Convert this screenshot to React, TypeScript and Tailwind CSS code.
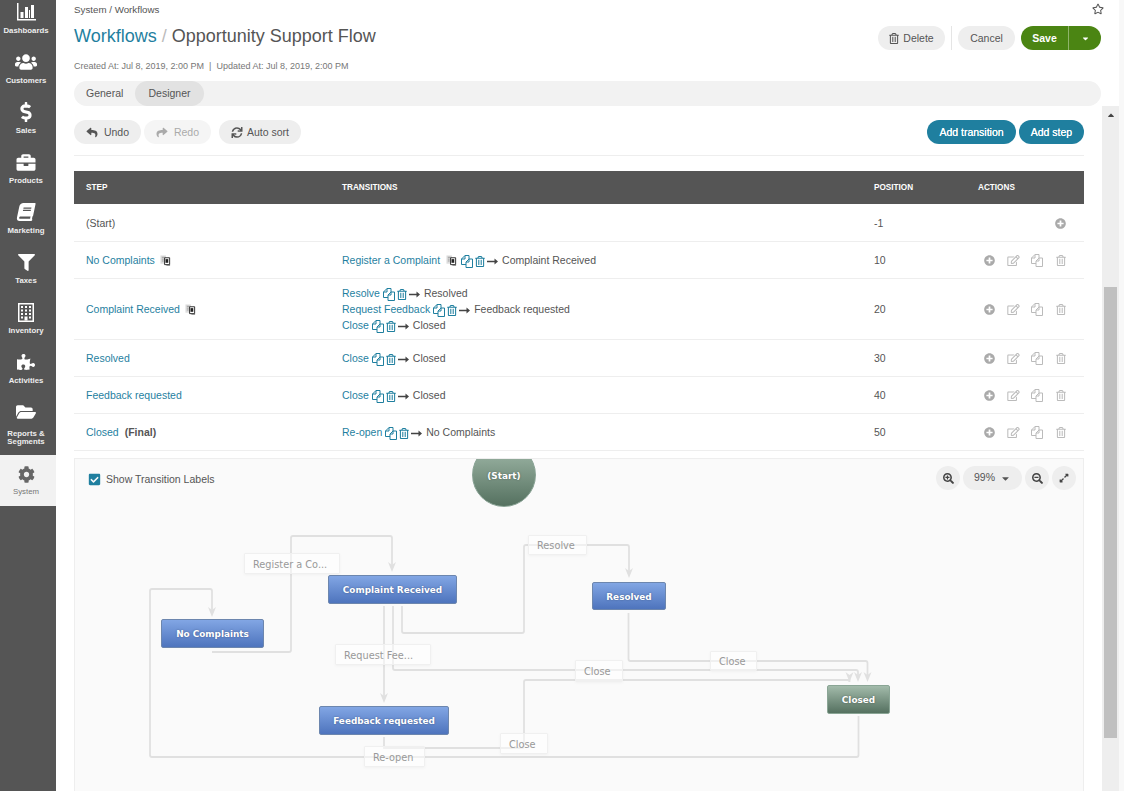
import React from 'react';
import {
  FaUsers, FaDollarSign, FaBriefcase, FaBook, FaFilter, FaPuzzlePiece, FaFolderOpen, FaCog,
  FaReply, FaShare, FaSync, FaRegTrashAlt, FaRegStar, FaPlusCircle, FaRegEdit,
  FaCheckSquare, FaSearchPlus, FaSearchMinus, FaExpandAlt, FaCaretDown, FaCaretUp,
} from 'react-icons/fa';

const BarsIcon = () => (
  <svg viewBox="0 0 20 18" className="w-5 h-[18px]" fill="currentColor">
    <path d="M1 0h1.5v16H20v1.5H1z" />
    <rect x="4.5" y="9" width="3" height="6" />
    <rect x="9" y="4" width="3" height="11" />
    <rect x="13" y="7" width="1" height="8" />
    <rect x="15" y="2" width="3" height="13" />
  </svg>
);

const BuildingIcon = () => (
  <svg viewBox="0 0 16 19" className="w-4 h-[19px]" fill="currentColor">
    <path d="M0 0h16v19H0zM1.5 1.5v16h13v-16z" fillRule="evenodd" />
    <path d="M3 3h2v2H3zM7 3h2v2H7zM11 3h2v2h-2zM3 6.500h2v2H3zM7 6.500h2v2H7zM11 6.500h2v2h-2zM3 10h2v2H3zM7 10h2v2H7zM11 10h2v2h-2zM3 13.500h2v2H3zM11 13.500h2v2h-2zM6.500 13.500h3v4h-3z" />
  </svg>
);

const TranslateIcon = () => (
  <svg viewBox="0 0 12 12" className="w-[11px] h-[11px] shrink-0 -translate-y-px">
    <rect x="0.5" y="0.5" width="6" height="9" fill="#dddddd" />
    <path d="M2 2.500h3M2 4.500h2M2 6.500h2" stroke="#888888" strokeWidth="0.8" />
    <path d="M5 3h5.500v7.500H5z" fill="#ffffff" stroke="#222222" strokeWidth="1" />
    <rect x="6" y="4.500" width="3" height="4" fill="#222222" />
    <path d="M7 11.500h4" stroke="#777777" strokeWidth="0.8" />
  </svg>
);

// two sheets with a cut corner, the stock copy icon has no such corner
const CopyIcon = ({ className }: { className: string }) => (
  <svg viewBox="0 0 12 13" className={className} fill="none" stroke="currentColor" strokeWidth="1">
    <path d="M5 9.500H.5V4L4 .5h4V4" />
    <path d="M4 .5V4H.5" />
    <path d="M8 4h3.500v8.500H5V7z" />
    <path d="M8 4v3H5" />
  </svg>
);

const navItems = [
  { label: 'Dashboards', icon: <BarsIcon /> },
  { label: 'Customers', icon: <FaUsers className="w-[22px] h-[20px]" /> },
  { label: 'Sales', icon: <FaDollarSign className="w-[14px] h-[20px]" /> },
  { label: 'Products', icon: <FaBriefcase className="w-[20px] h-[19px]" /> },
  { label: 'Marketing', icon: <FaBook className="w-[18px] h-[18px] -skew-x-12" /> },
  { label: 'Taxes', icon: <FaFilter className="w-[17px] h-[17px]" /> },
  { label: 'Inventory', icon: <BuildingIcon /> },
  { label: 'Activities', icon: <FaPuzzlePiece className="w-[18px] h-[18px]" /> },
];

const Sidebar = () => (
  <aside className="w-14 shrink-0 bg-[#555555] text-white flex flex-col">
    {navItems.map((item) => (
      <div key={item.label} className="flex flex-col items-center h-[50px] pt-[2px] pr-1">
        <div className="h-[20px] flex items-center justify-center">{item.icon}</div>
        <div className="text-[7.8px] font-bold leading-[12px] mt-[3px] text-[#eeeeee]">{item.label}</div>
      </div>
    ))}
    <div className="flex flex-col items-center h-[55px] pt-[2px] pr-1">
      <div className="h-[20px] flex items-center justify-center"><FaFolderOpen className="w-[20px] h-[18px]" /></div>
      <div className="text-[7.8px] font-bold leading-[8px] text-center mt-[8px] text-[#eeeeee]">Reports &<br />Segments</div>
    </div>
    <div className="h-[51px] bg-[#f2f2f2] text-[#666666] flex flex-col items-center pt-[11px] pr-1">
      <FaCog className="w-[17px] h-[17px]" />
      <div className="text-[7.8px] leading-[12px] mt-[3px] text-[#777777]">System</div>
    </div>
  </aside>
);

const Pill = ({ children, className = '' }: { children: React.ReactNode; className?: string }) => (
  <button className={`h-6 pt-px rounded-full text-[10.5px] flex items-center justify-center ${className}`}>
    {children}
  </button>
);

const Arrow = () => (
  <svg viewBox="0 0 11 7" className="w-[11px] h-[7px] text-[#444444] shrink-0 mr-[2px]" fill="currentColor">
    <path d="M0 2.750h7.500V.5L11 3.500 7.500 6.500V4.250H0z" />
  </svg>
);

const Transition = ({ name, to, translate }: { name: string; to: string; translate?: boolean }) => (
  <div className="flex items-center h-4 gap-[2px]">
    <span className="text-[#1f7f9f]">{name}</span>
    {translate && <span className="ml-[4px] mr-[1px]"><TranslateIcon /></span>}
    <CopyIcon className="w-[12px] h-[13px] text-[#1f7f9f] ml-[1px]" />
    <FaRegTrashAlt className="w-[10px] h-[11px] text-[#1f7f9f]" />
    <Arrow />
    <span>{to}</span>
  </div>
);

const Actions = ({ only }: { only?: boolean }) => (
  only ? (
    <div className="flex items-center justify-end pr-[12px]">
      <div className="w-6 flex justify-center"><FaPlusCircle className="w-[11px] h-[11px] text-[#aaaaaa]" /></div>
    </div>
  ) : (
    <div className="flex items-center justify-end pr-[11px] -mt-[2px] text-[#bbbbbb]">
      <div className="w-6 flex justify-center"><FaPlusCircle className="w-[11px] h-[11px] text-[#aaaaaa]" /></div>
      <div className="w-6 flex justify-center"><FaRegEdit className="w-[13px] h-[11px]" /></div>
      <div className="w-6 flex justify-center"><CopyIcon className="w-[12px] h-[13px]" /></div>
      <div className="w-6 flex justify-center"><FaRegTrashAlt className="w-[10px] h-[11px]" /></div>
    </div>
  )
);

const rows = [
  { step: 'No Complaints', translate: true, pos: '10', h: 'h-[37px]', trans: [{ name: 'Register a Complaint', to: 'Complaint Received', translate: true }] },
  { step: 'Complaint Received', translate: true, pos: '20', h: 'h-[61px]', trans: [{ name: 'Resolve', to: 'Resolved' }, { name: 'Request Feedback', to: 'Feedback requested' }, { name: 'Close', to: 'Closed' }] },
  { step: 'Resolved', pos: '30', h: 'h-[37px]', trans: [{ name: 'Close', to: 'Closed' }] },
  { step: 'Feedback requested', pos: '40', h: 'h-[37px]', trans: [{ name: 'Close', to: 'Closed' }] },
  { step: 'Closed', final: true, pos: '50', h: 'h-[37px]', trans: [{ name: 'Re-open', to: 'No Complaints' }] },
];

const gridCols = 'grid grid-cols-[256px_532px_104px_118px] items-center';

const WorkflowTable = () => (
  <div className="text-[10.5px] text-[#555555]">
    <div className={`${gridCols} h-[33px] pt-[2px] bg-[#555555] text-white text-[8.2px] font-bold`}>
      <div className="px-3">STEP</div>
      <div className="px-3">TRANSITIONS</div>
      <div className="px-3">POSITION</div>
      <div className="px-3">ACTIONS</div>
    </div>
    <div className={`${gridCols} h-[38px] pt-[2px] border-b border-[#eeeeee]`}>
      <div className="px-3">(Start)</div>
      <div />
      <div className="px-3">-1</div>
      <Actions only />
    </div>
    {rows.map((r) => (
      <div key={r.step} className={`${gridCols} ${r.h} pt-[2px] border-b border-[#eeeeee]`}>
        <div className="px-3 flex items-center gap-[5px]">
          <span className="text-[#1f7f9f]">{r.step}</span>
          {r.translate && <TranslateIcon />}
          {r.final && <span className="font-bold ml-[1px]">(Final)</span>}
        </div>
        <div className="px-3">
          {r.trans.map((t) => <Transition key={t.name} {...t} />)}
        </div>
        <div className="px-3">{r.pos}</div>
        <Actions />
      </div>
    ))}
  </div>
);

const Node = ({ label, className, green }: { label: string; className: string; green?: boolean }) => (
  <div
    className={`absolute flex items-center justify-center pt-[3px] rounded-[2px] border text-white font-bold text-[8.9px] font-['DejaVu_Sans',sans-serif] [text-shadow:0_0_2px_rgba(0,0,0,0.35)] ${
      green ? 'border-[#8aa595] bg-gradient-to-b from-[#a3bbab] to-[#557160]' : 'border-[#6c86ae] bg-gradient-to-b from-[#82a6e4] to-[#4e74bd]'
    } ${className}`}
  >
    {label}
  </div>
);

const EdgeLabel = ({ label, className }: { label: string; className: string }) => (
  <div className={`absolute flex items-center pl-[8px] pt-[3px] border border-[#f0f0f0] rounded-[1px] bg-white/50 shadow-[0_1px_3px_rgba(0,0,0,0.04)] text-[#999999] text-[9.75px] font-['DejaVu_Sans',sans-serif] ${className}`}>
    {label}
  </div>
);

// arrow tips in page coordinates, the svg viewBox starts at the panel corner
const tip = (x: number, y: number) => `${x - 4},${y - 10} ${x},${y - 7} ${x + 4},${y - 10} ${x},${y}`;

const edges = [
  'M212 652H289q2 0 2-2V538q0-2 2-2H390q2 0 2 2V566',
  'M402 606V631q0 2 2 2H522q2 0 2-2V547q0-2 2-2H627q2 0 2 2V572',
  'M384 606V697',
  'M393 606V668q0 2 2 2H856q2 0 2 2V676',
  'M628.500 613V659q0 2 2 2H865.500q2 0 2 2V676',
  'M384 737V748H522q2 0 2-2V682q0-2 2-2H847.500q2 0 2 2V676',
  'M858.500 716V755q0 2-2 2H152q-2 0-2-2V591q0-2 2-2H210q2 0 2 2V611',
];

const tips: [number, number][] = [[392, 572], [629, 578], [384, 703], [858, 682], [867.5, 682], [849.5, 682], [212, 617]];

const Diagram = () => (
  <div className="relative mt-[7px] h-[400px] border border-[#eeeeee] bg-[#fafafa] overflow-hidden text-[#555555]">
    <svg viewBox="75 459 1008 399" className="absolute left-0 top-0 w-[1008px] h-[399px]">
      {edges.map((d) => <path key={d} d={d} fill="none" stroke="#e0e0e0" strokeWidth="1.8" />)}
      {tips.map(([x, y]) => <polygon key={`${x}-${y}`} points={tip(x, y)} fill="#e0e0e0" />)}
    </svg>

    <div className="absolute left-[397px] -top-[16px] w-16 h-16 rounded-full border border-[#88a294] bg-gradient-to-b from-[#a3bbab] to-[#557160] flex items-center justify-center text-white font-bold text-[8.9px] font-['DejaVu_Sans',sans-serif] [text-shadow:0_0_2px_rgba(0,0,0,0.35)]">
      <span className="mt-[4px]">(Start)</span>
    </div>

    <Node label="Complaint Received" className="left-[253px] top-[116px] w-[129px] h-[29px]" />
    <Node label="No Complaints" className="left-[86px] top-[160px] w-[103px] h-[29px]" />
    <Node label="Resolved" className="left-[517px] top-[123px] w-[74px] h-[28px]" />
    <Node label="Feedback requested" className="left-[244px] top-[247px] w-[130px] h-[29px]" />
    <Node label="Closed" green className="left-[752px] top-[226px] w-[63px] h-[29px]" />

    <EdgeLabel label="Register a Co..." className="left-[169px] top-[94px] w-[96px] h-[21px]" />
    <EdgeLabel label="Request Fee..." className="left-[260px] top-[185px] w-[96px] h-[21px]" />
    <EdgeLabel label="Resolve" className="left-[453px] top-[76px] w-[59px] h-[20px]" />
    <EdgeLabel label="Close" className="left-[500px] top-[201px] w-[48px] h-[22px]" />
    <EdgeLabel label="Close" className="left-[635px] top-[192px] w-[47px] h-[20px]" />
    <EdgeLabel label="Close" className="left-[425px] top-[274px] w-[48px] h-[21px]" />
    <EdgeLabel label="Re-open" className="left-[289px] top-[287px] w-[61px] h-[21px]" />

    <label className="absolute left-[13px] top-[13px] flex items-center gap-[5px] text-[10.5px]">
      <FaCheckSquare className="w-[13px] h-[13px] text-[#1f7f9f]" />
      Show Transition Labels
    </label>

    <div className="absolute right-[7px] top-[7px] flex items-center gap-[3px] text-[#444444]">
      <div className="w-6 h-6 rounded-full bg-[#eeeeee] flex items-center justify-center"><FaSearchPlus className="w-[11px] h-[11px]" /></div>
      <div className="w-[59px] h-6 rounded-full bg-[#eeeeee] flex items-center justify-center gap-[5px] text-[10.5px] text-[#555555]">99% <FaCaretDown className="w-[11px] h-[11px]" /></div>
      <div className="w-6 h-6 rounded-full bg-[#eeeeee] flex items-center justify-center"><FaSearchMinus className="w-[11px] h-[11px]" /></div>
      <div className="w-6 h-6 rounded-full bg-[#eeeeee] flex items-center justify-center"><FaExpandAlt className="w-[10px] h-[10px]" /></div>
    </div>
  </div>
);

const Scrollbar = () => (
  <div className="w-[17px] shrink-0 bg-[#eeeeee] flex flex-col items-center">
    <FaCaretUp className="w-[10px] h-[10px] mt-[4px] text-[#444444]" />
    <div className="w-[13px] h-[451px] mt-[167px] bg-[#c0c0c0]" />
  </div>
);

const grayPill = 'bg-[#eeeeee] text-[#555555]';
const addButton = "h-6 pt-px rounded-full bg-[#1f7f9f] text-white text-[10.5px] [text-shadow:0_0_0.6px_#ffffff]";

export default function App() {
  return (
    <div className="flex w-[1124px] h-[791px] overflow-hidden bg-white font-['Liberation_Sans',Arial,sans-serif] text-[#555555]">
      <Sidebar />
      <main className="flex-1 min-w-0 flex flex-col">
        <header className="h-[106px] shrink-0 px-[18px]">
          <div className="h-[18px] pt-[3px] flex justify-between text-[9.75px] leading-[12px]">
            <span className="mt-px">System / Workflows</span>
            <FaRegStar className="w-[12px] h-[12px] -mr-[3px]" />
          </div>
          <div className="mt-[8px] h-6 flex items-center justify-between">
            <h1 className="text-[18px] pb-[4px]">
              <span className="text-[#1f7f9f]">Workflows</span>
              <span className="text-[#bbbbbb]"> / </span>
              Opportunity Support Flow
            </h1>
            <div className="flex items-center">
              <Pill className={`w-[67px] gap-[4px] ${grayPill}`}><FaRegTrashAlt className="w-[10px] h-[11px]" />Delete</Pill>
              <div className="w-px h-6 bg-[#e5e5e5] mx-[6px]" />
              <Pill className={`w-[57px] ${grayPill}`}>Cancel</Pill>
              <div className="ml-[6px] h-6 w-[80px] rounded-full bg-[#4b8513] text-white text-[10.5px] font-bold flex">
                <div className="w-[48px] pt-px flex items-center justify-center border-r border-[#8fb46b]">Save</div>
                <div className="flex-1 flex items-center justify-center"><FaCaretDown className="w-[9px] h-[9px]" /></div>
              </div>
            </div>
          </div>
          <div className="mt-[10px] h-3 text-[9px] leading-[12px] text-[#777777]">
            Created At: Jul 8, 2019, 2:00 PM &nbsp;|&nbsp; Updated At: Jul 8, 2019, 2:00 PM
          </div>
          <div className="mt-[9px] h-[25px] rounded-full bg-[#f2f2f2] flex items-center text-[10.5px]">
            <div className="px-3 w-[61px]">General</div>
            <div className="h-[25px] w-[69px] rounded-full bg-[#e2e2e2] flex items-center justify-center">Designer</div>
          </div>
        </header>

        <div className="flex-1 min-h-0 flex">
          <div className="flex-1 min-w-0 pl-[18px] pr-[18px] overflow-hidden">
            <div className="mt-[14px] flex items-center justify-between pb-[11px] border-b border-[#eeeeee]">
              <div className="flex items-center">
                <Pill className={`w-[67px] gap-[6px] ${grayPill}`}><FaReply className="w-[12px] h-[11px]" />Undo</Pill>
                <Pill className="w-[67px] gap-[6px] ml-[3px] bg-[#f5f5f5] text-[#aaaaaa]"><FaShare className="w-[12px] h-[11px]" />Redo</Pill>
                <Pill className={`w-[82px] gap-[4px] ml-[8px] ${grayPill}`}><FaSync className="w-[12px] h-[11px]" />Auto sort</Pill>
              </div>
              <div className="flex items-center gap-[3px]">
                <button className={`w-[89px] ${addButton}`}>Add transition</button>
                <button className={`w-[65px] ${addButton}`}>Add step</button>
              </div>
            </div>
            <div className="mt-[15px]"><WorkflowTable /></div>
            <Diagram />
          </div>
          <Scrollbar />
        </div>
      </main>
      <div className="w-[5px] shrink-0 bg-[#f8f8f8]" />
    </div>
  );
}
